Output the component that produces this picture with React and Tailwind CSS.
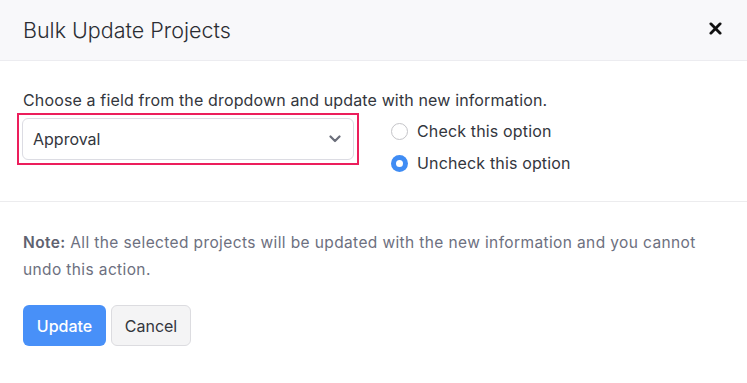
import React, { useState } from 'react';

const font = { fontFamily: 'Inter, "Noto Sans", sans-serif' };

function Radio({ checked, label, onClick }) {
  return (
    <label onClick={onClick} className="flex items-center gap-[9px] cursor-pointer h-[32px]">
      {checked ? (
        <span className="w-[17px] h-[17px] rounded-full bg-[#3f8cf4] flex items-center justify-center">
          <span className="w-[7px] h-[7px] rounded-full bg-white" />
        </span>
      ) : (
        <span className="w-[17px] h-[17px] rounded-full border border-[#c4c4c8] bg-white" />
      )}
      <span className="text-[16px] tracking-[0.15px] text-[#33363d]">{label}</span>
    </label>
  );
}

export default function App() {
  const [opt, setOpt] = useState('uncheck');

  return (
    <div className="w-[747px] h-[383px] bg-white" style={font}>
      {/* Header */}
      <div className="h-[61px] bg-[#f8f8fa] border-b border-[#ececf0] flex items-center justify-between pl-[23px] pr-[25px]">
        <h2 className="text-[21.5px] font-light text-[#2b2d33]">Bulk Update Projects</h2>
        <svg width="13" height="13" viewBox="0 0 14 14" className="mb-[4px]">
          <path d="M2 2 L12 12 M12 2 L2 12" stroke="#111" strokeWidth="3" strokeLinecap="round" />
        </svg>
      </div>

      {/* Body */}
      <div className="px-[23px] pt-[28px] pb-[22px] border-b border-[#ececee]">
        <p className="text-[16px] tracking-[0.14px] text-[#33363d] leading-[22px]">
          Choose a field from the dropdown and update with new information.
        </p>
        <div className="flex items-start mt-[2px]">
          <div className="-ml-[6px] border-2 border-[#ec1e5c] p-[3px] w-[342px]">
            <div className="h-[42px] rounded-[6px] border border-[#dcdce3] bg-white flex items-center justify-between pl-[10px] pr-[12px]">
              <span className="text-[16px] text-[#33363d]">Approval</span>
              <svg width="12" height="8" viewBox="0 0 12 8">
                <path d="M1.5 1.5 L6 6 L10.5 1.5" stroke="#6b6e7a" strokeWidth="2.2" fill="none" strokeLinecap="round" strokeLinejoin="round" />
              </svg>
            </div>
          </div>
          <div className="ml-[32px] flex flex-col mt-[2px]">
            <Radio checked={opt === 'check'} label="Check this option" onClick={() => setOpt('check')} />
            <Radio checked={opt === 'uncheck'} label="Uncheck this option" onClick={() => setOpt('uncheck')} />
          </div>
        </div>
      </div>

      {/* Footer */}
      <div className="px-[23px] pt-[27px]">
        <p className="text-[15.5px] tracking-[0.38px] text-[#6d7080] leading-[27px] w-[684px]">
          <span className="font-semibold text-[#5f6270]">Note:</span> All the selected projects will be updated with the new information and you cannot undo this action.
        </p>
        <div className="flex gap-[5px] mt-[22px]">
          <button className="h-[41px] w-[83px] rounded-[6px] bg-[#4890f8] text-white text-[16px] font-medium">Update</button>
          <button className="h-[41px] w-[80px] rounded-[6px] bg-[#f4f4f5] border border-[#dcdce0] text-[#33363d] text-[16px]">Cancel</button>
        </div>
      </div>
    </div>
  );
}
